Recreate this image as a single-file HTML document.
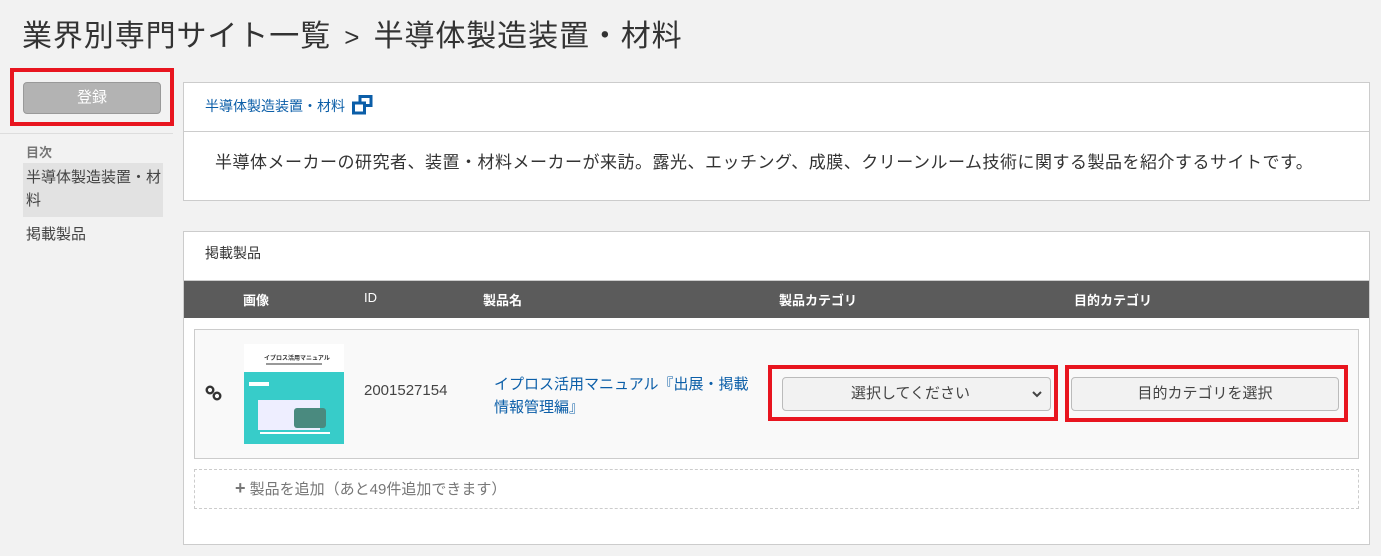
<!DOCTYPE html>
<html><head><meta charset="utf-8"><style>
*{box-sizing:border-box;margin:0;padding:0}
body{width:1381px;height:556px;background:#f2f2f2;font-family:"Liberation Sans","Noto Sans CJK JP",sans-serif;color:#333;position:relative;overflow:hidden}
.a{position:absolute}
.red{position:absolute;border:4px solid #e8151f}
</style></head><body>
<div class="a" style="left:22px;top:16px;font-size:30px;letter-spacing:0.9px;line-height:42px;color:#333;white-space:nowrap">業界別専門サイト一覧 <span style="font-size:26px;margin:0 4px">&gt;</span> 半導体製造装置・材料</div>
<div class="red" style="left:10px;top:68px;width:164px;height:58px"></div>
<div class="a" style="left:23px;top:82px;width:138px;height:32px;background:#b3b3b3;border:1px solid #999;border-radius:4px;color:#fff;font-size:15px;text-align:center;line-height:30px">登録</div>
<div class="a" style="left:0;top:133px;width:173px;height:1px;background:#ddd"></div>
<div class="a" style="left:26px;top:142px;font-size:13px;font-weight:bold;color:#777">目次</div>
<div class="a" style="left:23px;top:163px;width:140px;height:54px;background:#e2e2e2"></div>
<div class="a" style="left:26px;top:166px;width:140px;font-size:15px;line-height:23px;color:#444">半導体製造装置・材料</div>
<div class="a" style="left:26px;top:223px;font-size:15px;color:#444">掲載製品</div>

<div class="a" style="left:183px;top:82px;width:1187px;height:119px;background:#fff;border:1px solid #ccc"></div>
<div class="a" style="left:184px;top:131px;width:1185px;height:1px;background:#ccc"></div>
<div class="a" style="left:205px;top:95px;font-size:14px;color:#0b5ea8;line-height:20px">半導体製造装置・材料
<svg width="22" height="20" viewBox="0 0 22 20" style="vertical-align:-4px;margin-left:3px"><rect x="8" y="1.5" width="11" height="9" fill="none" stroke="#0b5ea8" stroke-width="3"/><rect x="1.5" y="8" width="11" height="10" fill="#fff" stroke="#0b5ea8" stroke-width="3"/></svg></div>
<div class="a" style="left:215px;top:151px;font-size:17px;letter-spacing:0.5px;line-height:24px;color:#333;white-space:nowrap">半導体メーカーの研究者、装置・材料メーカーが来訪。露光、エッチング、成膜、クリーンルーム技術に関する製品を紹介するサイトです。</div>

<div class="a" style="left:183px;top:231px;width:1187px;height:314px;background:#fff;border:1px solid #ccc"></div>
<div class="a" style="left:205px;top:243px;font-size:14px;line-height:20px">掲載製品</div>
<div class="a" style="left:184px;top:280px;width:1185px;height:1px;background:#ccc"></div>
<div class="a" style="left:184px;top:281px;width:1185px;height:37px;background:#5b5b5b;color:#fff;font-size:13px;font-weight:bold">
<span class="a" style="left:59px;top:9px">画像</span><span class="a" style="left:180px;top:9px;font-weight:normal">ID</span><span class="a" style="left:299px;top:9px">製品名</span><span class="a" style="left:595px;top:9px">製品カテゴリ</span><span class="a" style="left:890px;top:9px">目的カテゴリ</span></div>

<div class="a" style="left:194px;top:329px;width:1165px;height:130px;background:#f9f9f9;border:1px solid #ccc"></div>
<svg class="a" style="left:205px;top:385px" width="18" height="16" viewBox="0 0 18 16"><circle cx="5" cy="5" r="3.3" fill="none" stroke="#333" stroke-width="2.4"/><circle cx="12" cy="11" r="3.3" fill="none" stroke="#333" stroke-width="2.4"/></svg>
<div class="a" style="left:244px;top:344px;width:100px;height:100px;background:#fff">
<div class="a" style="left:20px;top:9px;font-size:6px;font-weight:bold;color:#333;white-space:nowrap">イプロス活用マニュアル</div>
<div class="a" style="left:22px;top:19px;width:56px;height:2px;background:#999"></div>
<div class="a" style="left:0;top:28px;width:100px;height:72px;background:#37ccc9"></div>
<div class="a" style="left:5px;top:38px;width:20px;height:4px;background:#fff"></div>
<div class="a" style="left:14px;top:56px;width:62px;height:30px;background:#eef"></div>
<div class="a" style="left:50px;top:64px;width:32px;height:20px;background:#4a8a7f;border-radius:3px"></div>
<div class="a" style="left:16px;top:88px;width:70px;height:2px;background:#fff"></div>
</div>
<div class="a" style="left:364px;top:382px;font-size:15px;color:#444">2001527154</div>
<div class="a" style="left:494px;top:373px;width:260px;font-size:15px;line-height:23px;color:#0b5ea8">イプロス活用マニュアル『出展・掲載<br>情報管理編』</div>

<div class="red" style="left:768px;top:365px;width:290px;height:56px"></div>
<div class="a" style="left:782px;top:377px;width:269px;height:34px;background:#f2f2f2;border:1px solid #bbb;border-radius:4px;font-size:15px;line-height:32px;text-align:center;color:#444;padding-right:12px">選択してください</div>
<svg class="a" style="left:1031px;top:389px" width="12" height="10" viewBox="0 0 12 10"><path d="M2 3l4 4 4-4" fill="none" stroke="#444" stroke-width="2"/></svg>
<div class="red" style="left:1065px;top:365px;width:283px;height:57px"></div>
<div class="a" style="left:1071px;top:377px;width:268px;height:34px;background:#f2f2f2;border:1px solid #bbb;border-radius:4px;font-size:15px;line-height:32px;text-align:center;color:#444">目的カテゴリを選択</div>

<div class="a" style="left:194px;top:469px;width:1165px;height:40px;border:1px dashed #ccc"></div>
<div class="a" style="left:235px;top:478px;font-size:15px;line-height:20px;color:#777"><b style="font-size:18px;color:#777">+</b> 製品を追加（あと49件追加できます）</div>
</body></html>
